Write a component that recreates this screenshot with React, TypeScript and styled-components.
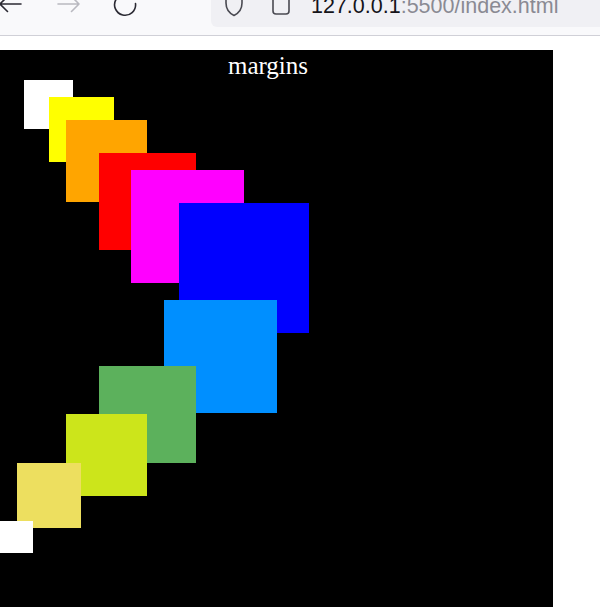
import React from 'react'
import styled, { createGlobalStyle } from 'styled-components'

const GlobalStyle = createGlobalStyle`
  html, body {
    margin: 0;
    padding: 0;
    background: #ffffff;
    overflow: hidden;
  }
`

const Window = styled.div`
  width: 600px;
  height: 607px;
  display: flex;
  flex-direction: column;
  overflow: hidden;
`

const Toolbar = styled.div`
  height: 35px;
  flex: none;
  display: flex;
  align-items: flex-start;
  background: #f9f9fb;
  border-bottom: 1px solid #d0d0d7;
  overflow: hidden;
`

const NavButton = styled.div<{ $ml: number }>`
  margin-left: ${p => p.$ml}px;
  margin-top: -10px;
  width: 24px;
  height: 28px;
  display: flex;
  align-items: center;
  justify-content: center;
  svg { display: block; }
`

const UrlBar = styled.div`
  margin-left: 74px;
  flex: 1;
  height: 27px;
  display: flex;
  align-items: flex-end;
  background: #f0f0f4;
  border-bottom-left-radius: 6px;
  padding-left: 13px;
  overflow: hidden;
`

const UrlIcon = styled.div<{ $ml: number; $mb: number }>`
  margin-left: ${p => p.$ml}px;
  margin-bottom: ${p => p.$mb}px;
  width: 20px;
  svg { display: block; }
`

const UrlText = styled.div`
  margin-left: 20px;
  margin-bottom: 9px;
  font-family: "Liberation Sans", Arial, sans-serif;
  font-size: 21.5px;
  line-height: 24px;
  white-space: nowrap;
  color: #8a8a93;
  span { color: #15141a; }
`

const Page = styled.div`
  flex: 1;
  padding-top: 14px;
  background: #ffffff;
`

const Stage = styled.div`
  width: 553px;
  height: 100%;
  background: #000000;
  display: flow-root;
  overflow: hidden;
`

const Title = styled.div`
  font-family: "Liberation Serif", "Times New Roman", serif;
  font-size: 25px;
  line-height: 28px;
  padding-top: 2px;
  padding-right: 17px;
  text-align: center;
  color: #ffffff;
`

const Square = styled.div<{ $size: number; $color: string; $ml: number; $mt: number; $h?: number }>`
  width: ${p => p.$size}px;
  height: ${p => p.$h ?? p.$size}px;
  margin-left: ${p => p.$ml}px;
  margin-top: ${p => p.$mt}px;
  background: ${p => p.$color};
`

const squares = [
  { color: '#ffffff', size: 49, ml: 24, mt: 0 },
  { color: '#ffff00', size: 65, ml: 49, mt: -32 },
  { color: '#ffa500', size: 81, ml: 66, mt: -42, h: 82 },
  { color: '#ff0000', size: 97, ml: 99, mt: -49 },
  { color: '#ff00ff', size: 113, ml: 131, mt: -80 },
  { color: '#0000ff', size: 130, ml: 179, mt: -80 },
  { color: '#008fff', size: 113, ml: 164, mt: -33 },
  { color: '#5cb15c', size: 97, ml: 99, mt: -47 },
  { color: '#cce51b', size: 81, ml: 66, mt: -49, h: 82 },
  { color: '#eddf5f', size: 64, ml: 17, mt: -33, h: 65 },
  { color: '#ffffff', size: 33, ml: 0, mt: -7, h: 32 },
]

const BackArrow = () => (
  <svg width="24" height="28" viewBox="0 0 24 28" fill="none" stroke="#2b2a33" strokeWidth="1.6" strokeLinecap="round">
    <path d="M1 14 H22 M1 14 L8.5 6.5 M1 14 L8.5 21.5" />
  </svg>
)

const ForwardArrow = () => (
  <svg width="24" height="28" viewBox="0 0 24 28" fill="none" stroke="#b9b9c0" strokeWidth="1.6" strokeLinecap="round">
    <path d="M2 14 H23 M23 14 L15.5 6.5 M23 14 L15.5 21.5" />
  </svg>
)

const Reload = () => (
  <svg width="24" height="28" viewBox="0 0 24 28" fill="none" stroke="#2b2a33" strokeWidth="1.6" strokeLinecap="round">
    <path d="M20.5 8.5 A10.5 10.5 0 1 0 22.5 13.5" />
    <path d="M21 2.5 V9 H14.5" />
  </svg>
)

const Shield = () => (
  <svg width="20" height="22" viewBox="0 0 20 22" fill="none" stroke="#4a4a52" strokeWidth="1.6" strokeLinejoin="round">
    <path d="M2 -2 V8 C2 14 6 18.5 10 20.5 C14 18.5 18 14 18 8 V-2" />
  </svg>
)

const PageIcon = () => (
  <svg width="20" height="20" viewBox="0 0 20 20" fill="none" stroke="#4a4a52" strokeWidth="1.6" strokeLinejoin="round">
    <path d="M2 -2 V15 A3 3 0 0 0 5 18 H15 A3 3 0 0 0 18 15 V-2" />
  </svg>
)

export default function App() {
  return (
    <Window>
      <GlobalStyle />
      <Toolbar>
        <NavButton $ml={-1}><BackArrow /></NavButton>
        <NavButton $ml={33}><ForwardArrow /></NavButton>
        <NavButton $ml={33}><Reload /></NavButton>
        <UrlBar>
          <UrlIcon $ml={0} $mb={10}><Shield /></UrlIcon>
          <UrlIcon $ml={27} $mb={11}><PageIcon /></UrlIcon>
          <UrlText><span>127.0.0.1</span>:5500/index.html</UrlText>
        </UrlBar>
      </Toolbar>
      <Page>
        <Stage>
          <Title>margins</Title>
          {squares.map((s, i) => (
            <Square key={i} $color={s.color} $size={s.size} $ml={s.ml} $mt={s.mt} $h={s.h} />
          ))}
        </Stage>
      </Page>
    </Window>
  )
}
